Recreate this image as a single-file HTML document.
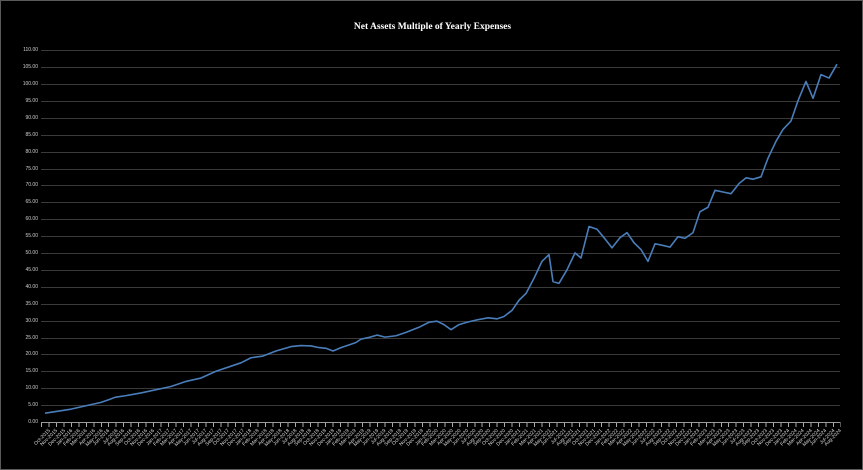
<!DOCTYPE html>
<html><head><meta charset="utf-8"><style>
html,body{margin:0;padding:0;background:#000;}
#w{position:relative;width:863px;height:470px;overflow:hidden;background:#000;box-sizing:border-box;border:1px solid #5a5a5a;}
#t{position:absolute;left:0;width:863px;top:21px;text-align:center;font:bold 9.5px "Liberation Serif",serif;color:#fff;}
.yl{position:absolute;left:0;width:37px;text-align:right;font:5px "Liberation Sans",sans-serif;color:#d0d0d0;}
#xl{position:absolute;left:40px;top:427px;width:800px;display:flex;}
#xl div{width:7.47px;flex:none;position:relative;height:30px;}
#xl span{position:absolute;right:1px;top:0;white-space:nowrap;font:5px "Liberation Sans",sans-serif;color:#d8d8d8;transform:rotate(-45deg);transform-origin:right top;}
#tk{position:absolute;left:40px;top:421px;width:800px;height:5px;background:repeating-linear-gradient(to right,#aaa 0,#aaa 1px,transparent 1px,transparent 7.47px);}
svg{position:absolute;left:0;top:0;}
</style></head><body><div id="w">
<div id="t">Net Assets Multiple of Yearly Expenses</div>
<div id="tk"></div>
<svg width="863" height="470">
<g stroke="#3a3a3a" stroke-width="1">
<line x1="40" x2="839" y1="49.5" y2="49.5"/><line x1="40" x2="839" y1="66.5" y2="66.5"/><line x1="40" x2="839" y1="83.5" y2="83.5"/><line x1="40" x2="839" y1="100.5" y2="100.5"/><line x1="40" x2="839" y1="117.5" y2="117.5"/><line x1="40" x2="839" y1="134.5" y2="134.5"/><line x1="40" x2="839" y1="151.5" y2="151.5"/><line x1="40" x2="839" y1="168.5" y2="168.5"/><line x1="40" x2="839" y1="184.5" y2="184.5"/><line x1="40" x2="839" y1="201.5" y2="201.5"/><line x1="40" x2="839" y1="218.5" y2="218.5"/><line x1="40" x2="839" y1="235.5" y2="235.5"/><line x1="40" x2="839" y1="252.5" y2="252.5"/><line x1="40" x2="839" y1="269.5" y2="269.5"/><line x1="40" x2="839" y1="286.5" y2="286.5"/><line x1="40" x2="839" y1="303.5" y2="303.5"/><line x1="40" x2="839" y1="320.5" y2="320.5"/><line x1="40" x2="839" y1="337.5" y2="337.5"/><line x1="40" x2="839" y1="353.5" y2="353.5"/><line x1="40" x2="839" y1="370.5" y2="370.5"/><line x1="40" x2="839" y1="387.5" y2="387.5"/><line x1="40" x2="839" y1="404.5" y2="404.5"/>
</g>
<line x1="40" x2="839" y1="421.5" y2="421.5" stroke="#999"/>
<g transform="translate(0,421) scale(1,-3.382)">
<polyline fill="none" stroke="#4a7ebb" stroke-width="1.6" vector-effect="non-scaling-stroke" stroke-linejoin="round" points="44,2.6 70,3.8 100,5.8 108,6.6 114,7.3 125,7.8 140,8.6 170,10.5 185,12 200,13 215,15 240,17.5 250,19 262,19.5 275,21 290,22.3 300,22.6 310,22.5 318,22 325,21.8 332,21 340,22 350,23 355,23.5 360,24.5 368,25 376,25.7 384,25.1 395,25.5 405,26.5 418,28 428,29.5 436,29.8 443,28.8 450,27.3 458,28.8 466,29.5 476,30.2 487,30.8 496,30.5 503,31.2 511,33 518,36 525,38 533,42.5 541,47.5 548,49.5 552,41.5 558,41 566,45 574,50 580,48.5 588,57.8 596,57 603,54.5 611,51.5 619,54.5 626,56 633,53 640,51 647,47.5 654,52.7 662,52.2 669,51.7 677,54.8 684,54.3 692,56 699,62.2 707,63.5 714,68.5 722,68 730,67.5 738,70.5 745,72.2 752,71.8 760,72.5 767,78 775,83 782,86.5 790,89 797,95 805,100.7 812,95.7 820,102.7 828,101.7 836,105.8"/>
</g>
</svg>
<div class="yl" style="top:46px">110.00</div><div class="yl" style="top:63px">105.00</div><div class="yl" style="top:80px">100.00</div><div class="yl" style="top:97px">95.00</div><div class="yl" style="top:114px">90.00</div><div class="yl" style="top:131px">85.00</div><div class="yl" style="top:148px">80.00</div><div class="yl" style="top:165px">75.00</div><div class="yl" style="top:181px">70.00</div><div class="yl" style="top:198px">65.00</div><div class="yl" style="top:215px">60.00</div><div class="yl" style="top:232px">55.00</div><div class="yl" style="top:249px">50.00</div><div class="yl" style="top:266px">45.00</div><div class="yl" style="top:283px">40.00</div><div class="yl" style="top:300px">35.00</div><div class="yl" style="top:317px">30.00</div><div class="yl" style="top:334px">25.00</div><div class="yl" style="top:350px">20.00</div><div class="yl" style="top:367px">15.00</div><div class="yl" style="top:384px">10.00</div><div class="yl" style="top:401px">5.00</div><div class="yl" style="top:418px">0.00</div>
<div id="xl">
<div><span>Oct-2015</span></div><div><span>Nov-2015</span></div><div><span>Dec-2015</span></div>
<div><span>Jan-2016</span></div><div><span>Feb-2016</span></div><div><span>Mar-2016</span></div><div><span>Apr-2016</span></div><div><span>May-2016</span></div><div><span>Jun-2016</span></div><div><span>Jul-2016</span></div><div><span>Aug-2016</span></div><div><span>Sep-2016</span></div><div><span>Oct-2016</span></div><div><span>Nov-2016</span></div><div><span>Dec-2016</span></div>
<div><span>Jan-2017</span></div><div><span>Feb-2017</span></div><div><span>Mar-2017</span></div><div><span>Apr-2017</span></div><div><span>May-2017</span></div><div><span>Jun-2017</span></div><div><span>Jul-2017</span></div><div><span>Aug-2017</span></div><div><span>Sep-2017</span></div><div><span>Oct-2017</span></div><div><span>Nov-2017</span></div><div><span>Dec-2017</span></div>
<div><span>Jan-2018</span></div><div><span>Feb-2018</span></div><div><span>Mar-2018</span></div><div><span>Apr-2018</span></div><div><span>May-2018</span></div><div><span>Jun-2018</span></div><div><span>Jul-2018</span></div><div><span>Aug-2018</span></div><div><span>Sep-2018</span></div><div><span>Oct-2018</span></div><div><span>Nov-2018</span></div><div><span>Dec-2018</span></div>
<div><span>Jan-2019</span></div><div><span>Feb-2019</span></div><div><span>Mar-2019</span></div><div><span>Apr-2019</span></div><div><span>May-2019</span></div><div><span>Jun-2019</span></div><div><span>Jul-2019</span></div><div><span>Aug-2019</span></div><div><span>Sep-2019</span></div><div><span>Oct-2019</span></div><div><span>Nov-2019</span></div><div><span>Dec-2019</span></div>
<div><span>Jan-2020</span></div><div><span>Feb-2020</span></div><div><span>Mar-2020</span></div><div><span>Apr-2020</span></div><div><span>May-2020</span></div><div><span>Jun-2020</span></div><div><span>Jul-2020</span></div><div><span>Aug-2020</span></div><div><span>Sep-2020</span></div><div><span>Oct-2020</span></div><div><span>Nov-2020</span></div><div><span>Dec-2020</span></div>
<div><span>Jan-2021</span></div><div><span>Feb-2021</span></div><div><span>Mar-2021</span></div><div><span>Apr-2021</span></div><div><span>May-2021</span></div><div><span>Jun-2021</span></div><div><span>Jul-2021</span></div><div><span>Aug-2021</span></div><div><span>Sep-2021</span></div><div><span>Oct-2021</span></div><div><span>Nov-2021</span></div><div><span>Dec-2021</span></div>
<div><span>Jan-2022</span></div><div><span>Feb-2022</span></div><div><span>Mar-2022</span></div><div><span>Apr-2022</span></div><div><span>May-2022</span></div><div><span>Jun-2022</span></div><div><span>Jul-2022</span></div><div><span>Aug-2022</span></div><div><span>Sep-2022</span></div><div><span>Oct-2022</span></div><div><span>Nov-2022</span></div><div><span>Dec-2022</span></div>
<div><span>Jan-2023</span></div><div><span>Feb-2023</span></div><div><span>Mar-2023</span></div><div><span>Apr-2023</span></div><div><span>May-2023</span></div><div><span>Jun-2023</span></div><div><span>Jul-2023</span></div><div><span>Aug-2023</span></div><div><span>Sep-2023</span></div><div><span>Oct-2023</span></div><div><span>Nov-2023</span></div><div><span>Dec-2023</span></div>
<div><span>Jan-2024</span></div><div><span>Feb-2024</span></div><div><span>Mar-2024</span></div><div><span>Apr-2024</span></div><div><span>May-2024</span></div><div><span>Jun-2024</span></div><div><span>Jul-2024</span></div><div><span>Aug-2024</span></div>
</div>
</div>
</body></html>
